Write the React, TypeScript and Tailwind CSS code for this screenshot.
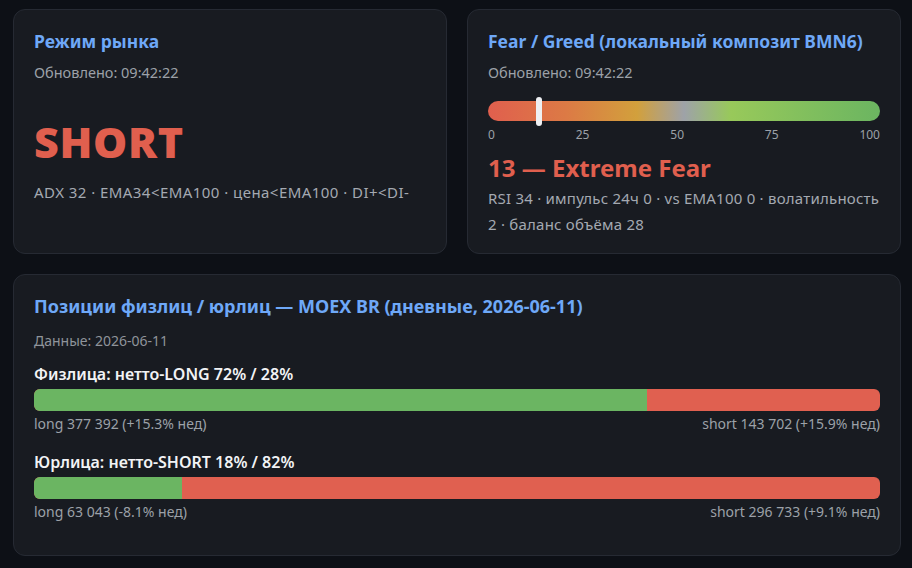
import React from 'react';

const card = 'rounded-xl border border-[#262a33] bg-[#181b21] px-5 pt-[19px]';
const title = 'text-[17.5px] font-bold text-[#6ea8f7] leading-6';
const muted = 'text-[14.5px] text-[#9ca1a8]';

type Side = {
  label: string;
  long: number;
  longText: string;
  shortText: string;
};

const sides: Side[] = [
  { label: 'Физлица: нетто-LONG 72% / 28%', long: 72.5, longText: 'long 377 392 (+15.3% нед)', shortText: 'short 143 702 (+15.9% нед)' },
  { label: 'Юрлица: нетто-SHORT 18% / 82%', long: 17.5, longText: 'long 63 043 (-8.1% нед)', shortText: 'short 296 733 (+9.1% нед)' },
];

function MarketRegime() {
  return (
    <div className={`${card} pb-4`}>
      <h2 className={title}>Режим рынка</h2>
      <div className={`${muted} mt-[9px]`}>Обновлено: 09:42:22</div>
      <div className="mt-[34px] text-[43px] font-black leading-[48px] tracking-[0.015em] text-[#e05f4e]">SHORT</div>
      <div className="mt-[15px] text-[15px] tracking-[0.03em] text-[#a4a9b1]">ADX 32 · EMA34&lt;EMA100 · цена&lt;EMA100 · DI+&lt;DI-</div>
    </div>
  );
}

function FearGreed() {
  const value = 13;
  return (
    <div className={`${card} pb-4`}>
      <h2 className={title}>Fear / Greed (локальный композит BMN6)</h2>
      <div className={`${muted} mt-[9px]`}>Обновлено: 09:42:22</div>
      <div className="relative mt-[17px] h-[20px] rounded-full bg-[linear-gradient(90deg,#e05f4e_0%,#dc7a45_20%,#d2a03c_38%,#9ea2a8_50%,#98c95a_62%,#6bb561_100%)]">
        <div
          className="absolute top-[-4px] h-[29px] w-[6px] -translate-x-1/2 rounded-full bg-[#eef0f3]"
          style={{ left: `${value}%` }}
        />
      </div>
      <div className="mt-[5px] flex justify-between text-[12px] text-[#9ca1a8]">
        <span>0</span>
        <span>25</span>
        <span>50</span>
        <span>75</span>
        <span>100</span>
      </div>
      <div className="mt-[8px] text-[24px] font-bold leading-8 text-[#e05f4e]">13 — Extreme Fear</div>
      <div className="mt-[1px] text-[15px] leading-[26px] tracking-[0.015em] text-[#a4a9b1]">
        RSI 34 · импульс 24ч 0 · vs EMA100 0 · волатильность 2 · баланс объёма 28
      </div>
    </div>
  );
}

function Positions() {
  return (
    <div className={`${card} col-span-2 pb-[31px]`}>
      <h2 className="text-[18px] font-bold leading-6 text-[#6ea8f7]">Позиции физлиц / юрлиц — MOEX BR (дневные, 2026-06-11)</h2>
      <div className="mt-[12px] text-[14px] text-[#8f949b]">Данные: 2026-06-11</div>
      {sides.map((s, i) => (
        <div key={s.label} className={i === 0 ? 'mt-[11px]' : 'mt-[14px]'}>
          <div className="text-[16px] font-semibold leading-6 text-[#f2f3f5]">{s.label}</div>
          <div className="mt-[3px] flex h-[22px] overflow-hidden rounded-md bg-[#e06050]">
            <div className="h-full bg-[#6bb562]" style={{ width: `${s.long}%` }} />
          </div>
          <div className="mt-[1px] flex justify-between text-[14px] leading-6 text-[#9ca1a8]">
            <span>{s.longText}</span>
            <span>{s.shortText}</span>
          </div>
        </div>
      ))}
    </div>
  );
}

export default function App() {
  return (
    <div className="h-screen overflow-hidden bg-[#0d1016] pl-[13px] pr-[11px] pt-[9px] font-['Noto_Sans',sans-serif]">
      <div className="grid grid-cols-2 gap-5">
        <MarketRegime />
        <FearGreed />
        <Positions />
      </div>
    </div>
  );
}
